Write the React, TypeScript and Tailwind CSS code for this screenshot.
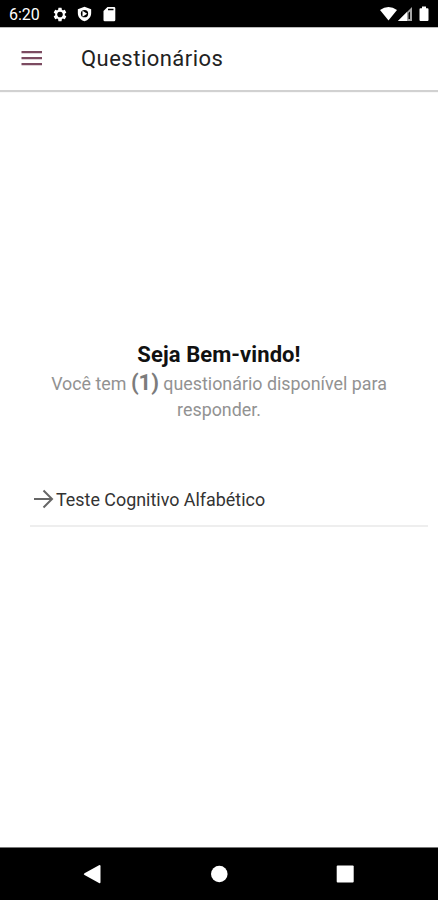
import { MdSettings } from 'react-icons/md';

export default function App() {
  return (
    <div className="flex h-[900px] w-[438px] flex-col overflow-hidden bg-white font-['Roboto',sans-serif]">
      <div className="flex h-[27px] shrink-0 items-center bg-black pl-[9px] text-white">
        <span className="w-[43px] pt-[2px] text-[16px] leading-none">6:20</span>
        <svg width="16" height="17" viewBox="0 0 24 24" preserveAspectRatio="none" className="mt-px">
          <MdSettings size={24} />
          <circle cx="12" cy="12" r="4" fill="black" />
        </svg>
        <svg className="ml-[8px] mt-px" width="17" height="16" viewBox="0 0 24 24" fill="currentColor">
          <path fillRule="evenodd" d="M12 1 2 5v6c0 5.500 4.500 10.700 10 12 5.500-1.300 10-6.500 10-12V5zM12 6a5.500 5.500 0 1 0 0 11a5.500 5.500 0 1 0 0-11zM9 7v9l7-4.500z" />
        </svg>
        <svg className="ml-[10px]" width="13" height="16" viewBox="0 0 13 16" fill="currentColor">
          <path fillRule="evenodd" d="M4.500 1H11a1.300 1.300 0 0 1 1.300 1.300V14a1.300 1.300 0 0 1-1.300 1.300H1.800A1.300 1.300 0 0 1 .5 14V5zM5 2.700v1.500h5.500V2.700z" />
        </svg>
        <svg className="ml-auto mr-[7px]" width="52" height="16" viewBox="0 0 52 16" fill="currentColor">
          <path d="M1 4Q9.500-2 18 4L9.500 14.500Z" />
          <path d="M19 15 33 1V15Z" opacity=".65" />
          <path d="M19 15 28 6V15Z" />
          <path d="M29.500 7 31 5.500V13h-1.500z" fill="black" />
          <path d="M41.500 2.200h1.500V.5h4v1.700h1.500q1 0 1 1V14q0 1-1 1h-7q-1 0-1-1V3.200q0-1 1-1z" />
        </svg>
      </div>
      <header className="flex h-[63px] shrink-0 items-center border-t border-[#bbb] bg-white pl-[21px] shadow-[0_2px_1px_rgba(0,0,0,0.18)]">
        <svg width="22" height="16" viewBox="0 0 22 16" fill="#7c4b61">
          <path d="M.5 0h20.500v2.200H.5zM.5 6h20.500v2.200H.5zM.5 12h20.500v2.200H.5z" />
        </svg>
        <h1 className="ml-[38px] text-[22px] leading-none tracking-[0.480px] text-[#222]">Questionários</h1>
      </header>
      <main className="flex grow flex-col">
        <h2 className="mt-[251px] text-center text-[22px] font-bold leading-[28px] tracking-[0.080px] text-[#111]">Seja Bem-vindo!</h2>
        <p className="mt-[2px] text-center text-[17.850px] leading-[26px] text-[#929292]">
          Você tem <b className="text-[22px] leading-none text-[#7c7c7c]">(1)</b> questionário disponível para<br />responder.
        </p>
        <div className="ml-[30px] mr-[10px] mt-[50px] flex h-[54px] items-center border-b-2 border-[#eee] text-[#333]">
          <svg width="26" height="26" viewBox="0 0 26 26" fill="none" stroke="#666" strokeWidth="2">
            <path d="M4 13H22M13.500 4.500 22 13 13.500 21.500" />
          </svg>
          <span className="pt-[2px] text-[17.900px]">Teste Cognitivo Alfabético</span>
        </div>
      </main>
      <nav className="flex h-[53px] shrink-0 items-center border-t border-[#777] bg-black">
        <svg width="438" height="52" fill="white">
          <path d="M84.500 25.200 99 17.200q1.500-.8 1.500 1V34q0 1.800-1.500 1L84.500 27q-1.500-.9 0-1.800Z" />
          <circle cx="219.300" cy="26" r="8.300" />
          <rect x="336.700" y="17.500" width="17" height="17" rx="1" />
        </svg>
      </nav>
    </div>
  );
}
